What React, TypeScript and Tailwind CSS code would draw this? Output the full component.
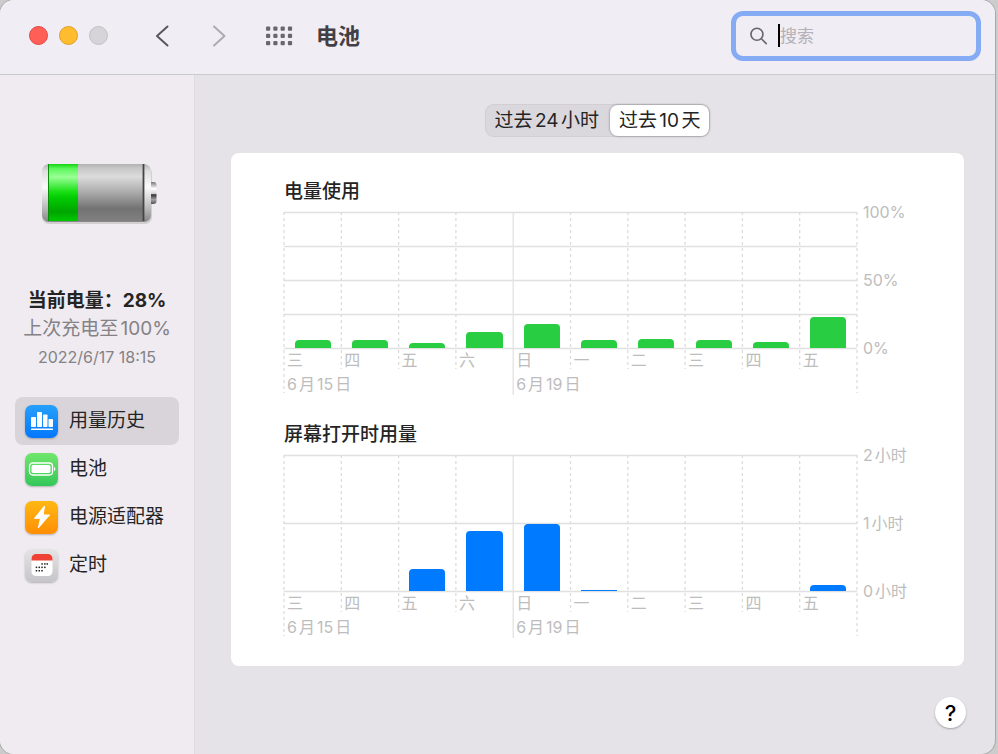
import type { ReactNode } from "react";

type ChartProps = {
  title: string;
  barClass: string;
  values: number[];
  steps: number[];
  axis: string[];
};

const PLOT_HEIGHT = 136;
const DAYS = ["三", "四", "五", "六", "日", "一", "二", "三", "四", "五"];
const DATES: Record<number, string> = { 0: "6月15日", 4: "6月19日" };

function Chart({ title, barClass, values, steps, axis }: ChartProps) {
  return (
    <section>
      <h2 className="text-[19px] font-medium leading-7 text-[#242424]">{title}</h2>
      <div className="mt-1.5 flex">
        <div className="relative h-[184px] flex-1">
          <svg className="absolute inset-0 h-full w-full overflow-visible" aria-hidden="true">
            {steps.map((y) => (
              <line key={y} x1="0" x2="100%" y1={y + 0.5} y2={y + 0.5} stroke="#e0e0e0" strokeWidth="1.3" />
            ))}
            {Array.from({ length: 11 }, (_, i) => {
              const solid = i === 4;
              const edge = i === 0 || i === 10;
              return (
                <line
                  key={i}
                  x1={`${i * 10}%`}
                  x2={`${i * 10}%`}
                  y1="0"
                  y2={solid ? 183 : edge ? 181 : 157}
                  stroke={solid ? "#e2e2e2" : "#dcdcdc"}
                  strokeWidth="1.3"
                  strokeDasharray={solid ? undefined : "3 3"}
                />
              );
            })}
          </svg>
          <div className="relative grid h-[136px] grid-cols-10 items-end">
            {values.map((v, i) => (
              <div
                key={i}
                className={`mx-auto w-[63%] ${v > 3 ? "rounded-t" : ""} ${barClass}`}
                style={{ height: Math.min(v, PLOT_HEIGHT) }}
              />
            ))}
          </div>
          <div className="relative grid grid-cols-10 text-base leading-6 text-[#bdbdbd]">
            {DAYS.map((day, i) => (
              <div key={i} className="pl-[3px] whitespace-nowrap">
                <div>{day}</div>
                <div>{DATES[i]}</div>
              </div>
            ))}
          </div>
        </div>
        <div className="-mt-3 flex h-[160px] w-[107px] flex-col justify-between pl-1.5 text-base leading-6 text-[#bdbdbd]">
          {axis.map((label) => (
            <span key={label}>{label}</span>
          ))}
        </div>
      </div>
    </section>
  );
}

function BigBattery() {
  return (
    <svg width="120" height="64" viewBox="0 0 120 64" role="img" aria-label="28%">
      <defs>
        <linearGradient id="shell" x1="0" y1="0" x2="0" y2="1">
          <stop offset="0" stopColor="#b5b5b5" />
          <stop offset=".12" stopColor="#dedede" />
          <stop offset=".4" stopColor="#fafafa" />
          <stop offset=".75" stopColor="#bcbcbc" />
          <stop offset="1" stopColor="#858585" />
        </linearGradient>
        <linearGradient id="empty" x1="0" y1="0" x2="0" y2="1">
          <stop offset="0" stopColor="#b2b2b2" />
          <stop offset=".07" stopColor="#c6c6c6" />
          <stop offset=".22" stopColor="#dcdcdc" />
          <stop offset=".5" stopColor="#aaaaaa" />
          <stop offset=".78" stopColor="#737373" />
          <stop offset="1" stopColor="#808080" />
        </linearGradient>
        <linearGradient id="charge" x1="0" y1="0" x2="0" y2="1">
          <stop offset="0" stopColor="#13d50f" />
          <stop offset=".08" stopColor="#5cf75a" />
          <stop offset=".23" stopColor="#99ff96" />
          <stop offset=".48" stopColor="#1be016" />
          <stop offset=".6" stopColor="#00cb00" />
          <stop offset=".84" stopColor="#00a400" />
          <stop offset="1" stopColor="#00c900" />
        </linearGradient>
        <linearGradient id="tip" x1="0" y1="0" x2="0" y2="1">
          <stop offset="0" stopColor="#777" />
          <stop offset=".3" stopColor="#fff" />
          <stop offset=".52" stopColor="#d5d5d5" />
          <stop offset=".58" stopColor="#333" />
          <stop offset=".8" stopColor="#a2a2a2" />
          <stop offset="1" stopColor="#555" />
        </linearGradient>
      </defs>
      <rect x="2" y="4" width="110" height="58" rx="7" fill="#000" opacity=".12" />
      <rect x="108" y="20" width="8.5" height="22" rx="3" fill="url(#tip)" />
      <rect x="2" y="2" width="109" height="58" rx="7" fill="url(#shell)" />
      <rect x="8" y="2" width="96" height="57" fill="url(#empty)" />
      <rect x="8" y="2" width="30" height="57" fill="url(#charge)" />
      <path d="M8.5 2v57" stroke="#078d07" />
      <path d="M103.5 2v57" stroke="#444" strokeWidth="1.8" />
    </svg>
  );
}

function NavItem({ label, active, tile, children }: { label: string; active?: boolean; tile: string; children: ReactNode }) {
  return (
    <li>
      <button
        type="button"
        aria-current={active ? "page" : undefined}
        className={`flex h-12 w-full items-center gap-[11px] rounded-lg pl-2.5 text-left text-[19.5px]/7 text-[#242424] ${active ? "bg-[#d9d4da]" : ""}`}
      >
        <span className={`flex size-[33px] items-center justify-center rounded-[7px] shadow-[0_1px_2px_rgba(0,0,0,0.25)] ${tile}`}>
          {children}
        </span>
        <span className="text-[19px] leading-7">{label}</span>
      </button>
    </li>
  );
}

export default function App() {
  return (
    <div className="min-h-screen bg-[#cdcccd] pr-[3px] font-[Inter,'Noto_Sans_CJK_SC',sans-serif] [text-autospace:normal]">
      <div className="flex min-h-screen flex-col overflow-hidden rounded-[14px] bg-[#e5e3e8] shadow-[0_0_0_1px_#a9a8aa]">
        <header className="flex h-[75px] items-center border-b border-[#cbc8ce] bg-[#f0edf4] pr-[14px] pb-[3px] pl-[29px]">
          <div className="flex gap-[11px]">
            <button type="button" aria-label="关闭" className="size-[19px] rounded-full border border-[#e2463f] bg-[#ff5f57]" />
            <button type="button" aria-label="最小化" className="size-[19px] rounded-full border border-[#e0a028] bg-[#febc2e]" />
            <button type="button" aria-label="缩放" disabled className="size-[19px] rounded-full border border-[#c3c1c6] bg-[#d6d4d9]" />
          </div>
          <button type="button" aria-label="后退" className="ml-[42px] p-1">
            <svg width="18" height="24" viewBox="0 0 18 24" fill="none" stroke="#59575c" strokeWidth="2" strokeLinecap="round" strokeLinejoin="round">
              <path d="M13.5 2.5 3 12l10.5 9.5" />
            </svg>
          </button>
          <button type="button" aria-label="前进" className="ml-[30px] p-1">
            <svg width="18" height="24" viewBox="0 0 18 24" fill="none" stroke="#adabb1" strokeWidth="2" strokeLinecap="round" strokeLinejoin="round">
              <path d="M4 2.5 14.500 12 4 21.500" />
            </svg>
          </button>
          <button type="button" aria-label="显示全部" className="ml-[33px]">
            <svg width="28" height="20" viewBox="0 0 28 20" fill="#69676d">
              {[0, 1, 2].map((r) =>
                [0, 1, 2, 3].map((c) => <rect key={`${r}-${c}`} x={1 + c * 7.3} y={0.500 + r * 7.3} width="4.2" height="4.2" rx="1" />),
              )}
            </svg>
          </button>
          <h1 className="ml-[23px] text-[22px] font-bold leading-8 text-[#424045]">电池</h1>
          <label className="ml-auto flex h-[50px] w-[250px] items-center rounded-[12px] border-[5px] border-[#86abf5] pl-[14px]">
            <svg width="20" height="20" viewBox="0 0 20 20" fill="none" stroke="#69676d" strokeWidth="1.900" strokeLinecap="round" aria-hidden="true">
              <circle cx="8" cy="8" r="6.900" />
              <path d="m13.200 13.200 5.600 5.600" />
            </svg>
            <span className="ml-[11px] h-[23px] w-0.5 bg-black" aria-hidden="true" />
            <input
              type="text"
              aria-label="搜索"
              placeholder="搜索"
              className="w-full min-w-0 bg-transparent text-[17px] leading-6 outline-none placeholder:text-[#b3b0b7]"
            />
          </label>
        </header>

        <div className="flex flex-1">
          <aside className="w-[195px] shrink-0 border-r border-[#dddae0] bg-[#efebf0] px-[15px] pt-[87px]">
            <div className="flex justify-center pl-1.5">
              <BigBattery />
            </div>
            <div className="mt-[61px] flex flex-col items-center whitespace-nowrap">
              <p className="text-[19px] font-bold leading-7 text-[#242424]">当前电量：28%</p>
              <p className="text-[19px] leading-7 text-[#848286]">上次充电至100%</p>
              <p className="text-base leading-7 text-[#848286]">2022/6/17 18:15</p>
            </div>
            <nav className="mt-[26px]">
              <ul>
                <NavItem label="用量历史" active tile="bg-linear-to-b from-[#26a0fb] to-[#0677fc]">
                  <svg width="24" height="20" viewBox="0 0 24 20" fill="#fff">
                    <rect x="1" y="6" width="5" height="10" rx=".8" />
                    <rect x="7" y="1" width="5" height="15" rx=".8" />
                    <rect x="13" y="3.500" width="4.500" height="12.500" rx=".8" />
                    <rect x="18.500" y="8" width="4.500" height="8" rx=".8" />
                    <rect x="1" y="17.500" width="22" height="1.500" rx=".5" />
                  </svg>
                </NavItem>
                <NavItem label="电池" tile="bg-linear-to-b from-[#70e66b] to-[#31c75a]">
                  <svg width="28" height="14" viewBox="0 0 28 14">
                    <rect x="1.500" y="1" width="23" height="12" rx="3.200" fill="none" stroke="#fff" strokeWidth="1.300" />
                    <rect x="3.500" y="3" width="19" height="8" rx="1.700" fill="#fff" />
                    <path d="M26 5c1.800.8 1.800 3.200 0 4z" fill="#fff" />
                  </svg>
                </NavItem>
                <NavItem label="电源适配器" tile="bg-linear-to-b from-[#ffb813] to-[#ff8e05]">
                  <svg width="18" height="24" viewBox="0 0 18 24" fill="#fff" stroke="#fff" strokeWidth="1" strokeLinejoin="round">
                    <path d="M11.500 1 1.500 13.300h6L5.300 23 16.500 10h-6.300z" />
                  </svg>
                </NavItem>
                <NavItem label="定时" tile="bg-linear-to-b from-[#e5e5e6] to-[#c5c5c9]">
                  <svg width="22" height="22" viewBox="0 0 22 22">
                    <rect x=".5" width="21" height="22" rx="4.500" fill="#fff" />
                    <path d="M.5 6.500V4.500A4.500 4.500 0 0 1 5 0h12a4.500 4.500 0 0 1 4.500 4.500v2z" fill="#f04135" />
                    <g fill="#222">
                      {[9.2, 12.6, 16].map((y, r) =>
                        [5.200, 8, 10.800, 13.600].concat(16)
                          .filter((_, c) => (r === 0 ? c > 1 - 0 : r === 2 ? c < 3 : c < 4))
                          .map((x) => <rect key={`${x}-${y}`} x={x - 0.5} y={y} width="1.500" height="1.500" />),
                      )}
                    </g>
                  </svg>
                </NavItem>
              </ul>
            </nav>
          </aside>

          <main className="flex min-w-0 flex-1 flex-col pt-[29px] pr-[31px] pl-9">
            <div role="group" aria-label="时间范围" className="flex h-[33px] self-center rounded-[9px] bg-[#dad8dd] text-[19px] leading-7 text-[#242424] shadow-[inset_0_0_0_1px_#d1ced4]">
              <button type="button" aria-pressed="false" className="px-2.5">
                过去24小时
              </button>
              <button type="button" aria-pressed="true" className="m-px rounded-lg bg-white px-[9px] shadow-[0_0_2px_1px_rgba(0,0,0,0.2)]">
                过去10天
              </button>
            </div>
            <div className="mt-4 flex flex-col gap-[25px] rounded-lg bg-white pt-[25px] pb-[27px] pl-[53px]">
              <Chart title="电量使用" barClass="bg-[#28cd41]" steps={[0, 34, 68, 102, 136]} axis={["100%", "50%", "0%"]} values={[8, 8, 5, 16, 24, 8, 9, 8, 6, 31]} />
              <Chart title="屏幕打开时用量" barClass="bg-[#007aff]" steps={[0, 68, 136]} axis={["2小时", "1小时", "0小时"]} values={[0, 0, 22, 60, 67, 1, 0, 0, 0, 6]} />
            </div>
            <button type="button" aria-label="帮助" className="mt-auto mb-[26px] -mr-0.5 size-[31px] self-end rounded-full bg-white text-[22px] font-medium leading-7 text-black shadow-[0_1px_2px_rgba(0,0,0,0.3)]">
              ?
            </button>
          </main>
        </div>
      </div>
    </div>
  );
}
